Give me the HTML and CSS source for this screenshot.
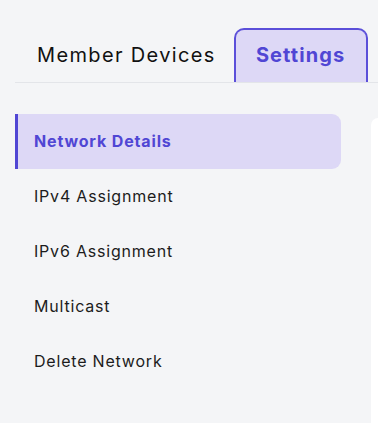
FILE: index.html
```html
<!DOCTYPE html>
<html>
<head>
<meta charset="utf-8">
<link rel="stylesheet" href="styles.css">
</head>
<body>
<div class="tabs">
  <div class="tab">Member Devices</div>
  <div class="tab active">Settings</div>
</div>
<div class="main">
  <nav class="sidebar">
    <div class="item active">Network Details</div>
    <div class="item">IPv4 Assignment</div>
    <div class="item">IPv6 Assignment</div>
    <div class="item">Multicast</div>
    <div class="item">Delete Network</div>
  </nav>
  <div class="panel"></div>
</div>
</body>
</html>
```
FILE: styles.css
```css
html, body {
  margin: 0;
  padding: 0;
  background: #f4f5f7;
  font-family: "Inter", "Open Sans", sans-serif;
  color: #1a1a1a;
  overflow: hidden;
}
.tabs {
  display: flex;
  align-items: flex-end;
  margin-left: 15px;
  padding-top: 28px;
  border-bottom: 1px solid #e3e5e9;
  height: 54px;
}
.tab {
  font-size: 20px;
  letter-spacing: 1.35px;
  color: #111;
  padding: 0 18px 0 22px;
  height: 54px;
  line-height: 54px;
  box-sizing: border-box;
}
.tab.active {
  background: #ddd8f6;
  border: 2px solid #5b4fd9;
  border-bottom: none;
  border-radius: 10px 10px 0 0;
  color: #5046d4;
  font-weight: 700;
  letter-spacing: 1.1px;
  width: 134px;
  padding: 0;
  text-align: center;
  line-height: 50px;
}
.main {
  display: flex;
  margin-top: 31px;
  margin-left: 15px;
}
.sidebar {
  width: 326px;
  display: flex;
  flex-direction: column;
}
.item {
  height: 55px;
  line-height: 55px;
  padding-left: 19px;
  font-size: 16px;
  letter-spacing: 0.8px;
  color: #1c1c1c;
}
.item.active {
  background: #ddd8f6;
  border-left: 3px solid #5046d4;
  padding-left: 16px;
  border-radius: 0 9px 9px 0;
  color: #5046d4;
  font-weight: 700;
  letter-spacing: 0.85px;
}
.panel {
  margin-left: 30px;
  margin-top: 4px;
  flex: 1;
  height: 305px;
  background: #fff;
  border-radius: 9px 0 0 0;
}
```
